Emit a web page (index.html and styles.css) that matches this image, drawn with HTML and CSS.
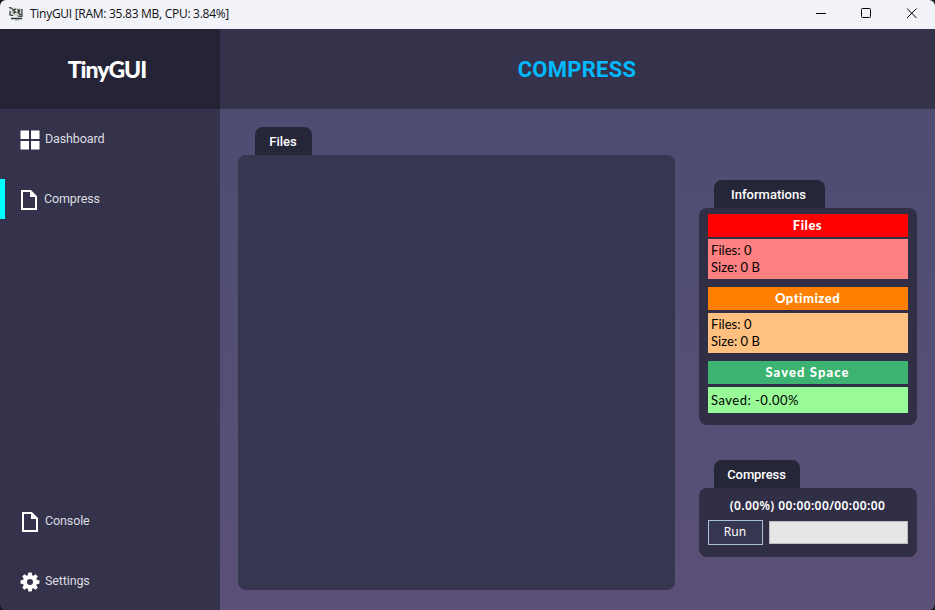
FILE: index.html
```html
<!DOCTYPE html>
<html lang="en">
<head>
<meta charset="utf-8">
<title>TinyGUI</title>
<link rel="stylesheet" href="styles.css">
</head>
<body>
<div class="window">
  <header class="titlebar">
    <svg class="app-icon" width="16" height="16" viewBox="0 0 16 16">
      <path d="M1 1L14 2.500V10.500L2.500 9.500Z" fill="#d3d6d0"/>
      <path d="M1 1.500L4.500 2.500M2 5V9L5 9.500M8 3L5 4L7.500 6L5.500 7.500M9.500 3L11 5L9 7M12 3.500L10.500 7L13 9M14 3V10.500L9.500 10" fill="none" stroke="#24282a" stroke-width="1.100"/>
      <path d="M4.500 5.500L6 6.500M9 6L11 7.500" stroke="#758d43" stroke-width="1"/>
      <path d="M3 12.500H14" stroke="#2d3232" stroke-width="1.600"/>
      <path d="M7 14H11" stroke="#969b9b"/>
    </svg>
    <span class="window-title">TinyGUI [RAM: 35.83 MB, CPU: 3.84%]</span>
    <svg class="controls" width="104" height="14" viewBox="0 0 104 14" fill="none" stroke="#000">
      <path d="M1 6.500H11"/>
      <rect x="46.500" y="1.500" width="9" height="9" rx="1"/>
      <path d="M92 1.500L101.500 11M101.500 1.500L92 11"/>
    </svg>
  </header>
  <div class="app">
    <aside class="sidebar">
      <div class="brand"><span>TinyGUI</span></div>
      <nav class="nav">
        <a class="item dashboard">
          <svg width="20" height="20" viewBox="0 0 20 20" fill="#fff"><path d="M.5.500H9V9H.500ZM11 .500H19.500V9H11ZM.500 11H9V19.500H.500ZM11 11H19.500V19.500H11Z"/></svg>
          <span>Dashboard</span>
        </a>
        <a class="item compress active">
          <svg width="20" height="20" viewBox="0 0 20 20"><path d="M2 1H10.500L16 6.500V19H2Z" fill="none" stroke="#fff" stroke-width="2"/><path d="M10 0L17 7H10Z" fill="#fff"/></svg>
          <span>Compress</span>
        </a>
      </nav>
      <nav class="nav bottom">
        <a class="item console">
          <svg width="20" height="20" viewBox="0 0 20 20"><path d="M3 1H11.500L17 6.500V19H3Z" fill="none" stroke="#fff" stroke-width="2"/><path d="M11 0L18 7H11Z" fill="#fff"/></svg>
          <span>Console</span>
        </a>
        <a class="item settings">
          <svg width="20" height="20" viewBox="0 0 20 20"><path fill="#fff" fill-rule="evenodd" d="M8.400.500H11.600L12.200 3.200L13.300 3.700L15.600 2.200L17.800 4.400L16.300 6.700L16.800 7.800L19.500 8.400V11.600L16.800 12.200L16.300 13.300L17.800 15.600L15.600 17.800L13.300 16.300L12.200 16.800L11.600 19.500H8.400L7.800 16.800L6.700 16.300L4.400 17.800L2.200 15.600L3.700 13.300L3.200 12.200L.500 11.600V8.400L3.200 7.800L3.700 6.700L2.200 4.400L4.400 2.200L6.700 3.700L7.800 3.200ZM10 7A3 3 0 1 0 10 13A3 3 0 1 0 10 7Z"/></svg>
          <span>Settings</span>
        </a>
      </nav>
    </aside>
    <main class="main">
      <div class="heading"><h1>COMPRESS</h1></div>
      <div class="content">
        <section class="group files">
          <h2 class="tab files-tab">Files</h2>
          <div class="panel file-list"></div>
        </section>
        <div class="side">
          <section class="group">
            <h2 class="tab info-tab">Informations</h2>
            <div class="panel info">
              <h3 class="red">Files</h3>
              <p class="pink">Files: 0<br>Size: 0 B</p>
              <h3 class="orange">Optimized</h3>
              <p class="peach">Files: 0<br>Size: 0 B</p>
              <h3 class="green">Saved Space</h3>
              <p class="mint">Saved: -0.00%</p>
            </div>
          </section>
          <section class="group run-group">
            <h2 class="tab compress-tab">Compress</h2>
            <div class="panel runner">
              <div class="status"><span>(0.00%) 00:00:00/00:00:00</span></div>
              <div class="run-row">
                <button type="button">Run</button>
                <div class="progress"></div>
              </div>
            </div>
          </section>
        </div>
      </div>
    </main>
  </div>
</div>
</body>
</html>
```
FILE: styles.css
```css
* { box-sizing: border-box; }
body, h1, h2, h3, p { margin: 0; }
body { background: #15151c; font-family: Roboto, sans-serif; }
svg { display: block; flex: none; }
.window {
  width: 935px;
  height: 610px;
  display: flex;
  flex-direction: column;
  overflow: hidden;
  border-radius: 6px;
}
.titlebar {
  height: 29px;
  flex: none;
  display: flex;
  align-items: center;
  padding: 0 18px 2px 8px;
  background: #f1f3f9;
}
.window-title {
  margin-left: 6px;
  font: 12px/16px "Open Sans", sans-serif;
  letter-spacing: -0.28px;
  color: #111;
  white-space: nowrap;
}
.controls { margin-left: auto; margin-right: -2px; }
.app { flex: 1; display: flex; min-height: 0; }
.sidebar {
  width: 220px;
  flex: none;
  display: flex;
  flex-direction: column;
  background: #34334b;
}
.brand {
  height: 80px;
  display: flex;
  align-items: center;
  justify-content: center;
  padding: 0 6px 1px 0;
  background: #252436;
  color: #fff;
  font: 900 23px/30px Lato, sans-serif;
  letter-spacing: -1px;
}
.nav { padding-top: 10px; display: flex; flex-direction: column; gap: 20px; }
.bottom { margin-top: auto; padding: 0 0 9px; }
.item {
  height: 40px;
  display: flex;
  align-items: center;
  padding-left: 20px;
  gap: 5px;
  font-size: 12.5px;
  letter-spacing: -0.12px;
  color: #dddde1;
}
.item svg { margin-top: 2px; }
.item span { margin-bottom: 2px; }
.compress { gap: 4px; }
.active { border-left: 5px solid #00ffff; padding-left: 15px; }
.main { flex: 1; display: flex; flex-direction: column; }
.heading {
  height: 80px;
  flex: none;
  display: flex;
  align-items: center;
  justify-content: center;
  padding: 2px 1px 0 0;
  background: #34334b;
}
h1 { font-size: 22px; line-height: 28px; font-weight: 700; letter-spacing: .25px; color: #00b9ff; }
.content {
  flex: 1;
  display: flex;
  align-items: flex-start;
  gap: 24px;
  padding: 18px;
  background: linear-gradient(#4d4d71, #5b5078);
}
.files { width: 437px; }
.side { width: 218px; padding-top: 53px; }
.group { display: flex; flex-direction: column; align-items: flex-start; }
.run-group { margin-top: 35px; }
.tab {
  width: 57px;
  height: 28px;
  margin-left: 17px;
  border-radius: 8px 8px 0 0;
  background: #252638;
  color: #fff;
  font-size: 13px;
  line-height: 29px;
  font-weight: 500;
  text-align: center;
}
.files-tab { padding-right: 1px; }
.info-tab, .compress-tab { margin-left: 15px; }
.info-tab { width: 111px; padding-right: 2px; }
.compress-tab { width: 86px; padding-right: 1px; letter-spacing: -0.1px; }
.panel { width: 100%; border-radius: 8px; background: #302f46; }
.file-list { height: 435px; background: #373651; }
.info { height: 217px; padding: 6px 9px; font-family: Lato, sans-serif; }
h3 {
  height: 23px;
  font-size: 13px;
  line-height: 23px;
  font-weight: 900;
  color: #fff;
  text-align: center;
  letter-spacing: .5px;
  padding-right: 1px;
}
.info p {
  height: 40px;
  margin: 3px 0 8px;
  padding: 3px;
  font-size: 13px;
  line-height: 17px;
  letter-spacing: .05px;
  color: #000;
}
.info .pink { margin-top: 2px; background: #ff8080; }
.info .peach { background: #ffc080; }
.info .mint { height: 26px; padding-top: 5px; background: #98fb98; letter-spacing: .5px; }
.red { background: #ff0000; }
.orange { background: #ff8000; }
.green { background: #3cb371; letter-spacing: 1.1px; }
.runner { height: 69px; padding: 8px 9px; }
.status {
  height: 20px;
  display: flex;
  justify-content: center;
  padding-right: 1px;
  color: #fff;
  font: 600 12px/19px "Noto Sans", sans-serif;
  letter-spacing: .4px;
  white-space: nowrap;
}
.run-row { display: flex; align-items: flex-start; gap: 6px; margin-top: 4px; }
button {
  width: 55px;
  height: 25px;
  padding: 0 1px 1px 0;
  border: 1px solid #a9c0d8;
  background: #373651;
  color: #fff;
  font: 12px/20px "Noto Sans", sans-serif;
}
.progress { width: 139px; height: 23px; margin-top: 1px; border: 1px solid #bcbcbc; background: #e6e6e6; }
```
